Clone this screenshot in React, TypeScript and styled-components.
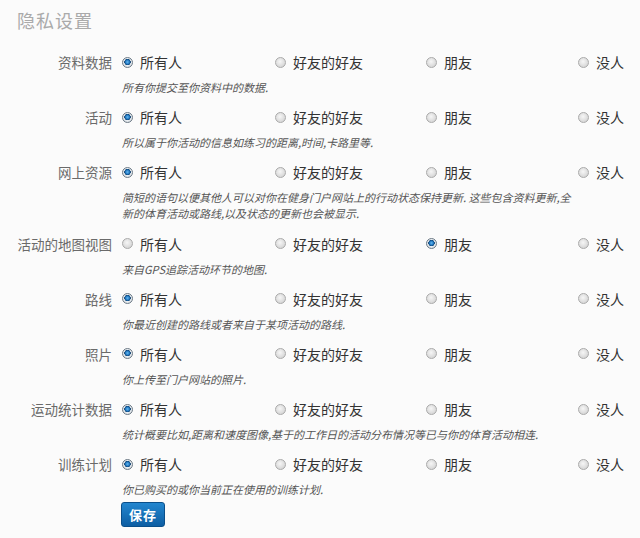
import styled, { createGlobalStyle } from 'styled-components';

const GlobalStyle = createGlobalStyle`
  html, body {
    margin: 0;
    padding: 0;
    background: #fbfbfb;
  }
  body {
    font-family: "Noto Sans CJK SC", "Liberation Sans", sans-serif;
  }
`;

const Page = styled.div`
  padding: 8px 0 10px 17px;
`;

const Title = styled.h1`
  margin: 0 0 20px;
  font-size: 18px;
  line-height: 24px;
  font-weight: normal;
  color: #aaaaaa;
  letter-spacing: 1px;
`;

const Row = styled.div`
  display: grid;
  grid-template-columns: 95px 1fr;
  column-gap: 10px;
  margin-bottom: 12.2px;

  &:last-of-type {
    margin-bottom: 0;
  }
`;

const Label = styled.div`
  text-align: right;
  font-size: 13.5px;
  line-height: 20px;
  height: 20px;
  color: #6a6a6a;
  white-space: nowrap;
`;

const Body = styled.div`
  display: flex;
  flex-direction: column;
  gap: 7px;
`;

const Options = styled.div`
  display: grid;
  grid-template-columns: 153px 151px 152px auto;
  height: 20px;
`;

const Option = styled.label`
  display: flex;
  align-items: center;
  gap: 7px;
  font-size: 14px;
  line-height: 20px;
  color: #333;
  white-space: nowrap;
`;

const Radio = styled.span<{ $checked: boolean }>`
  width: 11px;
  height: 11px;
  border-radius: 50%;
  flex: none;
  box-sizing: border-box;
  border: 1px solid ${({ $checked }) => ($checked ? '#6d7a86' : '#aaaaaa')};
  background: ${({ $checked }) =>
    $checked
      ? 'radial-gradient(circle at 50% 45%, #66baf2 0, #1a6fb8 2.2px, #0d3f6e 3px, #e9eef2 3.4px, #c9cfd4 100%)'
      : 'radial-gradient(circle at 45% 40%, #f6f6f6 0, #d8d8d8 70%, #c6c6c6 100%)'};
`;

const Desc = styled.p`
  margin: 0;
  max-width: 454px;
  font-size: 11px;
  line-height: 16px;
  font-style: italic;
  color: #555;
`;

const SaveButton = styled.button`
  display: block;
  margin: 5px 0 0 104px;
  width: 44px;
  height: 25px;
  padding: 0;
  border: 1px solid #0a4f8a;
  border-radius: 3px;
  background: linear-gradient(#2386cf, #0d5ea3);
  color: #fff;
  font-family: "Noto Sans CJK SC", "Liberation Sans", sans-serif;
  font-size: 13px;
  line-height: 23px;
  font-weight: bold;
  letter-spacing: 1px;
  cursor: pointer;
`;

const choices = ['所有人', '好友的好友', '朋友', '没人'];

const settings = [
  { label: '资料数据', value: 0, desc: '所有你提交至你资料中的数据.' },
  { label: '活动', value: 0, desc: '所以属于你活动的信息如练习的距离,时间,卡路里等.' },
  {
    label: '网上资源',
    value: 0,
    desc: '简短的语句以便其他人可以对你在健身门户网站上的行动状态保持更新. 这些包含资料更新,全新的体育活动或路线,以及状态的更新也会被显示.',
  },
  { label: '活动的地图视图', value: 2, desc: '来自GPS追踪活动环节的地图.' },
  { label: '路线', value: 0, desc: '你最近创建的路线或者来自于某项活动的路线.' },
  { label: '照片', value: 0, desc: '你上传至门户网站的照片.' },
  {
    label: '运动统计数据',
    value: 0,
    desc: '统计概要比如,距离和速度图像,基于的工作日的活动分布情况等已与你的体育活动相连.',
  },
  { label: '训练计划', value: 0, desc: '你已购买的或你当前正在使用的训练计划.' },
];

export default function App() {
  return (
    <>
      <GlobalStyle />
      <Page>
        <Title>隐私设置</Title>
        {settings.map(s => (
          <Row key={s.label}>
            <Label>{s.label}</Label>
            <Body>
              <Options>
                {choices.map((c, i) => (
                  <Option key={c}>
                    <Radio $checked={i === s.value} />
                    {c}
                  </Option>
                ))}
              </Options>
              <Desc>{s.desc}</Desc>
            </Body>
          </Row>
        ))}
        <SaveButton>保存</SaveButton>
      </Page>
    </>
  );
}
